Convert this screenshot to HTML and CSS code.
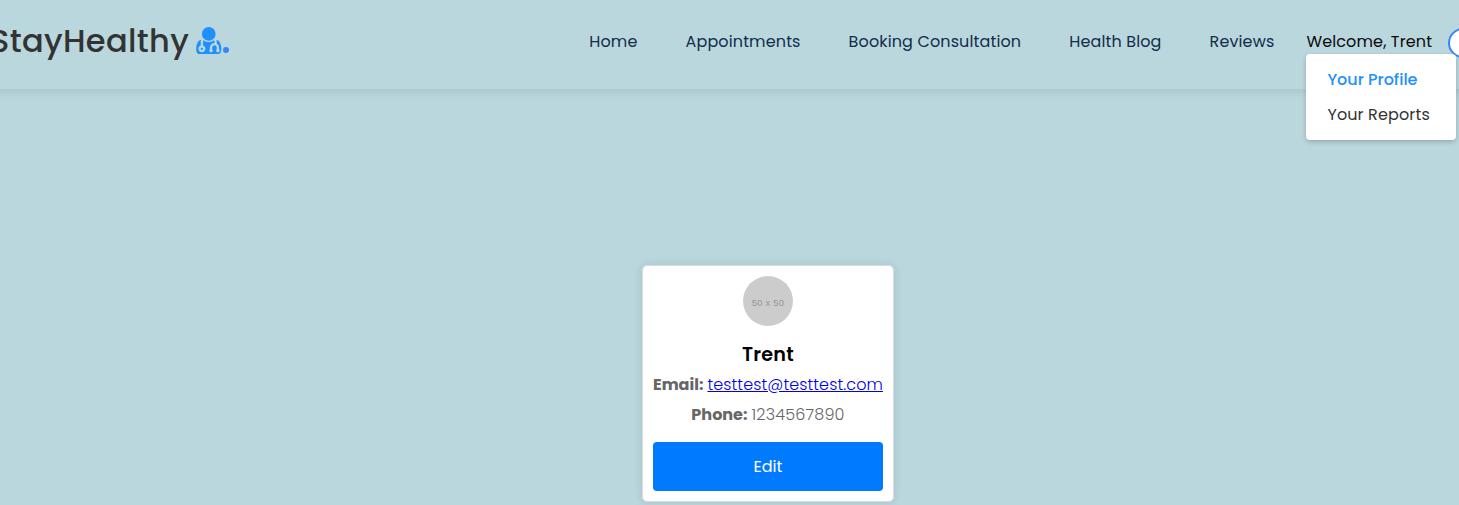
FILE: index.html
```
<!DOCTYPE html>
<html lang="en">
<head>
<meta charset="utf-8">
<title>StayHealthy</title>
<link rel="stylesheet" href="styles.css">
</head>
<body>
<nav class="navbar">
  <a class="logo"><span class="logo-text">StayHealthy</span>
    <svg class="logo-icon" viewBox="0 0 1408 1536"><path fill="#2190ff" transform="translate(0 1408) scale(1 -1)" d="M384 192q0 26 -19 45t-45 19t-45 -19t-19 -45t19 -45t45 -19t45 19t19 45zM1408 131q0 -121 -73 -190t-194 -69h-874q-121 0 -194 69t-73 190q0 68 5.5 131t24 138t47.5 132.5t81 103t120 60.5q-22 -52 -22 -120v-203q-58 -20 -93 -70t-35 -111q0 -80 56 -136t136 -56t136 56t56 136q0 61 -35.5 111t-92.5 70v203q0 62 25 93q132 -104 295 -104t295 104q25 -31 25 -93v-64q-106 0 -181 -75t-75 -181v-89q-32 -29 -32 -71q0 -40 28 -68t68 -28t68 28t28 68q0 42 -32 71v89q0 52 38 90t90 38t90 -38t38 -90v-89q-32 -29 -32 -71q0 -40 28 -68t68 -28t68 28t28 68q0 42 -32 71v89q0 68 -34.5 127.5t-93.5 93.5q0 10 .5 42.5t0 48t-2.5 41.5t-7 47t-13 40q68 -15 120 -60.5t81 -103t47.5 -132.5t24 -138t5.5 -131zM1088 1024q0 -159 -112.5 -271.5t-271.5 -112.5t-271.5 112.5t-112.5 271.5t112.5 271.5t271.5 112.5t271.5 -112.5t112.5 -271.5z"/></svg>
    <span class="logo-dot"></span>
  </a>
  <div class="links">
    <a class="link">Home</a>
    <a class="link">Appointments</a>
    <a class="link">Booking Consultation</a>
    <a class="link">Health Blog</a>
    <a class="link reviews">Reviews</a>
    <div class="welcome">Welcome, Trent
      <div class="dropdown">
        <a class="item profile">Your Profile</a>
        <a class="item">Your Reports</a>
      </div>
    </div>
    <span class="logout"></span>
  </div>
</nav>
<main class="page">
  <section class="card">
    <div class="avatar">50 x 50</div>
    <h3 class="name">Trent</h3>
    <p class="row"><b>Email:</b><a class="email" href="#">testtest@testtest.com</a></p>
    <p class="row"><b>Phone:</b><span class="phone">1234567890</span></p>
    <button class="edit">Edit</button>
  </section>
</main>
</body>
</html>
```
FILE: styles.css
```
* { box-sizing: border-box; }
body {
  margin: 0;
  height: 505px;
  overflow: hidden;
  background: #bad7dd;
  font-family: Poppins, Inter, sans-serif;
  font-size: 16px;
}
.navbar {
  height: 89px;
  margin: 0 -20px;
  padding-left: 20px;
  display: flex;
  align-items: flex-start;
  box-shadow: 0 2px 10px rgba(0, 0, 0, 0.1);
}
.logo {
  display: flex;
  flex: none;
  width: 589.3px;
  padding-top: 17px;
}
.logo-text {
  width: 206.4px;
  margin-left: -10px;
  color: #333;
  font-size: 32px;
  font-weight: 500;
  line-height: 48px;
  letter-spacing: 0.35px;
  white-space: nowrap;
}
.logo-icon { width: 25.5px; height: 27.5px; margin-top: 9.6px; }
.logo-dot {
  width: 6px;
  height: 6px;
  margin: 29.5px 0 0 1.3px;
  border-radius: 50%;
  background: #3685fb;
}
.links {
  display: flex;
  flex: none;
  padding-top: 30px;
  line-height: 24px;
  letter-spacing: 0.13px;
  white-space: nowrap;
}
.link { margin-right: 48px; color: #132c4a; }
.reviews { margin-right: 32px; }
.welcome {
  position: relative;
  width: 142px;
  color: #0b0b0b;
}
.dropdown {
  position: absolute;
  top: 24px;
  left: 0;
  width: 150px;
  height: 86px;
  padding: 8px 21px;
  border-radius: 4px;
  background: #fff;
  box-shadow: 0 2px 5px rgba(0, 0, 0, 0.2);
}
.item { display: block; height: 35px; line-height: 35px; color: #333; }
.profile { color: #2190ff; font-weight: 500; letter-spacing: 0; }
.logout {
  width: 60px;
  height: 30px;
  margin-top: -2px;
  border: 2px solid #3685fb;
  border-radius: 15px;
  background: #fff;
}
.page { display: flex; padding: 176px 0 0 642px; }
.card {
  width: 252px;
  height: 237px;
  padding: 10px;
  border: 1px solid #d5dcde;
  border-radius: 5px;
  background: #fff;
  box-shadow: 0 0 10px rgba(0, 0, 0, 0.1);
  text-align: center;
}
.avatar {
  width: 50px;
  height: 50px;
  margin: 0 auto;
  border-radius: 50%;
  background: #ccc;
  color: #969696;
  font: 9.5px/54px "Liberation Sans", Arial, sans-serif;
  letter-spacing: 0.2px;
}
.name { margin: 14px 0 0; font-size: 19.2px; font-weight: 600; line-height: 30px; letter-spacing: 0.2px; color: #000; }
.row {
  display: flex;
  justify-content: center;
  gap: 4px;
  margin: 0;
  line-height: 30px;
  color: #666;
  white-space: nowrap;
  font-weight: 300;
  letter-spacing: 0.1px;
}
.row b { font-weight: 700; letter-spacing: 0; }
.row .phone { letter-spacing: 0.18px; }
.email { color: #0000ee; }
.edit {
  display: block;
  width: 230px;
  height: 49px;
  margin-top: 12px;
  border: 0;
  border-radius: 4px;
  background: #007bff;
  color: #fff;
  font: inherit;
}
```
